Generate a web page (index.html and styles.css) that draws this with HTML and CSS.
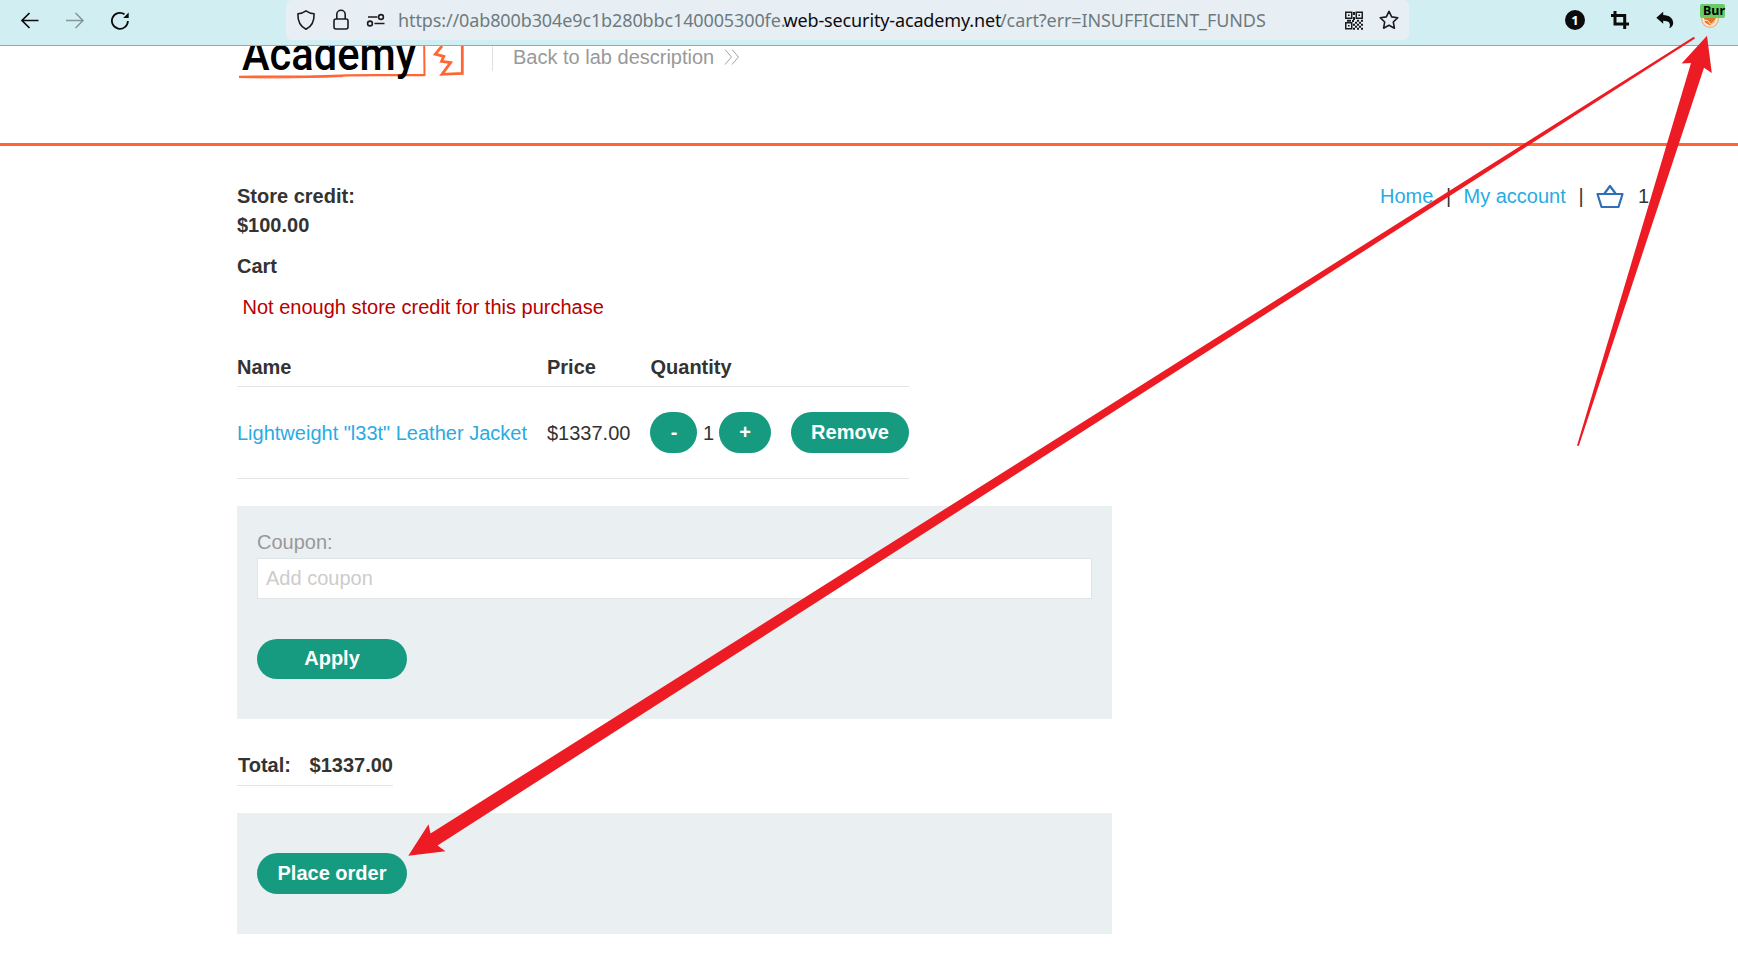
FILE: index.html
```html
<!DOCTYPE html>
<html lang="en">
<head>
<meta charset="utf-8">
<title>Cart</title>
<link rel="stylesheet" href="styles.css">
</head>
<body>
<div class="toolbar">
  <div class="nav-buttons">
    <svg width="20" height="20" viewBox="0 0 20 20"><path d="M18.500 10.500H2M9.500 3 2 10.500 9.500 18" fill="none" stroke="#0c0c0d" stroke-width="1.700"/></svg>
    <svg width="20" height="20" viewBox="0 0 20 20"><path d="M1 10.500H17.500M10.500 3 18 10.500 10.500 18" fill="none" stroke="#859696" stroke-width="1.500"/></svg>
    <svg width="20" height="20" viewBox="0 0 20 20"><path d="M17.900 11A8 8 0 1 1 14.500 4.300" fill="none" stroke="#0c0c0d" stroke-width="1.800"/><path d="M18.700 2.500V8H13.200Z" fill="#0c0c0d"/></svg>
  </div>
  <div class="urlbar">
    <div class="site-icons">
      <svg width="20" height="22" viewBox="0 0 20 22"><path d="M10 1.800C7.500 3.600 4.800 4.500 1.900 4.700 1.700 11.500 3.400 17 10 20.300 16.600 17 18.300 11.500 18.100 4.700 15.200 4.500 12.500 3.600 10 1.800Z" fill="none" stroke="#1c1c1e" stroke-width="1.600" stroke-linejoin="round"/></svg>
      <svg width="18" height="22" viewBox="0 0 18 22"><rect x="2" y="10" width="14" height="10" rx="2" fill="none" stroke="#1c1c1e" stroke-width="1.600"/><path d="M4.800 10V5.500a4.200 4.200 0 0 1 8.400 0V10" fill="none" stroke="#1c1c1e" stroke-width="1.600"/></svg>
      <svg width="20" height="14" viewBox="0 0 20 14"><g fill="none" stroke="#1c1c1e" stroke-width="1.600"><path d="M2 4H11.500M8.500 10.500H18.500"/><circle cx="15" cy="4" r="2.400"/><circle cx="4" cy="10.500" r="2.400"/></g></svg>
    </div>
    <div class="url"><span class="u1">https://0ab800b304e9c1b280bbc140005300fe.</span><span class="u2">web-security-academy.net</span><span class="u3">/cart?err=INSUFFICIENT_FUNDS</span></div>
    <svg class="qr" width="18" height="19" viewBox="0 0 18 19"><g fill="none" stroke="#1c1c1e" stroke-width="1.500"><rect x=".75" y="1.250" width="6" height="6"/><rect x="11.250" y="1.250" width="6" height="6"/><rect x=".75" y="11.750" width="6" height="6"/></g><path d="M3 3.500h1.600v1.600H3zM13.400 3.500H15v1.600h-1.600zM3 14h1.600v1.600H3zM8 1h2v3H8zM8 6h2v3H8zM2 8.700h4v2H2zM7 9h2v2H7zM12 8.700h2v2h-2zM16 8.700h2v2h-2zM10 10.700h2v2h-2zM14 10.700h2v2h-2zM8 12.700h2v2H8zM12 12.700h2v2h-2zM16 12.700h2v2h-2zM10 14.700h2v2h-2zM14 14.700h2v2h-2zM8 16.700h2v2H8zM12 16.700h2v2h-2zM16 16.700h2v2h-2z" fill="#1c1c1e"/></svg>
    <svg class="star" width="20" height="20" viewBox="0 0 20 20"><path d="m10 1.300 2.700 5.600 6.100.8-4.500 4.300 1.100 6.200-5.400-3-5.400 3 1.100-6.200L1.200 7.700l6.100-.8Z" fill="none" stroke="#1c1c1e" stroke-width="1.600" stroke-linejoin="round"/></svg>
  </div>
  <div class="extensions">
    <div class="counter">1</div>
    <svg class="crop" width="18" height="18" viewBox="0 0 18 18"><path d="M4 0V13H18M0 4.500H13.700V18" fill="none" stroke="#0c0c0d" stroke-width="3"/></svg>
    <svg class="undo" width="18" height="18" viewBox="0 0 18 18"><path d="M.3 6.700 7.200.7V4C13.200 4.300 17.200 7 17.200 12.300 17.200 14.500 15.500 16.500 13.300 17.300 15.300 12 12.800 9.800 7.200 9.700V12.800Z" fill="#0c0c0d"/></svg>
    <div class="proxy">
      <svg width="20" height="20" viewBox="0 0 20 20"><circle cx="10" cy="9" r="9" fill="#f2b277"/><circle cx="10" cy="9" r="7.700" fill="#f7e9da"/><path d="M3.500 6 9 7.500 16.500 6 14.500 12.500 10 15.500 5 12.500Z" fill="#e57624"/><path d="M3 10 7.500 10.500 11 14.500 16.500 9" fill="none" stroke="#fbeee0" stroke-width="1"/></svg>
      <span class="badge">Bur</span>
    </div>
  </div>
</div>

<header class="lab-header">
  <svg class="logo" width="230" height="36" viewBox="0 0 230 36">
    <path d="M1 30.800C40 30.500 75 31.200 110 29.300 140 28.900 165 29.300 186.500 29.200" fill="none" stroke="#ff6633" stroke-width="2.300"/>
    <path d="M4 31.600C35 32.300 70 31.700 105 30.600" fill="none" stroke="#ff6633" stroke-width="1"/>
    <path d="M186.200 0 186.500 30" fill="none" stroke="#ff6633" stroke-width="2"/>
    <path d="M204 0 197.300 8.200 205.800 10.500 203.500 15.400 212.600 16.600 204 28.300 224.300 27.300 224.300 0" fill="none" stroke="#ff6633" stroke-width="2.800"/>
    <text class="logo-text" x="4" y="24" textLength="174" lengthAdjust="spacingAndGlyphs">Academy</text>
  </svg>
  <a class="back">Back to lab description
    <svg width="16" height="18" viewBox="0 0 16 18"><path d="M1 1.500 7.500 9 1 16.500M8 1.500 14.500 9 8 16.500" fill="none" stroke="#a4a4a4" stroke-width="1"/></svg>
  </a>
</header>

<main class="page">
  <div class="top">
    <div class="credit">Store credit:<br>$100.00</div>
    <nav class="links">
      <a>Home</a><span>|</span><a>My account</a><span>|</span>
      <svg width="28" height="25" viewBox="0 0 28 25"><path d="M1.500 10H26.500L22.500 23H5.500ZM8.500 9.500 14 2 19.500 9.500" fill="none" stroke="#2f6fb8" stroke-width="2.200" stroke-linejoin="round"/></svg>
      <span class="count">1</span>
    </nav>
  </div>
  <div class="title">Cart</div>
  <div class="error">Not enough store credit for this purchase</div>

  <div class="table">
    <div class="row head"><span>Name</span><span>Price</span><span>Quantity</span></div>
    <div class="row item">
      <a>Lightweight "l33t" Leather Jacket</a>
      <span>$1337.00</span>
      <div class="qty"><button class="minus">-</button><span>1</span><button class="plus">+</button><button class="remove">Remove</button></div>
    </div>
  </div>

  <section class="panel coupon">
    <div class="label">Coupon:</div>
    <div class="field">Add coupon</div>
    <button class="apply">Apply</button>
  </section>

  <div class="total"><span>Total:</span><span>$1337.00</span></div>

  <section class="panel order"><button class="place">Place order</button></section>
</main>

<svg class="arrows" width="1738" height="957" viewBox="0 0 1738 957">
  <path d="M408.300 855.700 428.500 824.300 430.500 833.500 1693.800 36.700 1695 38.600 437.500 845.500 445.500 851.300Z"/>
  <path d="M1707 35.700 1681.600 63.400 1691 63 1577 445.500 1578.800 446 1704 67.700 1711.800 73Z"/>
</svg>
</body>
</html>
```
FILE: styles.css
```css
* { box-sizing: border-box; }
body {
  margin: 0;
  height: 957px;
  overflow: hidden;
  position: relative;
  background: #fff;
  color: #333332;
  font: 20px/29px "Liberation Sans", Arial, sans-serif;
}
svg { display: block; flex: none; }

.toolbar {
  display: flex;
  height: 46px;
  background: #d1eef2;
  border-bottom: 1px solid #96a9ad;
}
.nav-buttons { display: flex; gap: 25px; width: 286px; padding: 10px 0 0 20px; }
.urlbar {
  display: flex;
  width: 1123px;
  height: 40px;
  background: #e8eff4;
  border-radius: 6px;
}
.site-icons { display: flex; align-items: center; gap: 16px; width: 112px; padding-left: 10px; }
.url {
  display: flex;
  width: 947px;
  font: 18px/40px "Noto Sans", sans-serif;
  color: #6d7b7e;
  white-space: pre;
}
.u1 { width: 385.500px; letter-spacing: -0.120px; }
.u2 { width: 216.500px; letter-spacing: -0.140px; color: #0c0c0d; }
.u3 { letter-spacing: -0.100px; }
.qr { margin: 11px 16px 0 0; }
.star { margin-top: 10px; }
.extensions { display: flex; padding-left: 156px; }
.counter {
  width: 20px;
  height: 20px;
  margin: 10px 26px 0 0;
  border-radius: 50%;
  background: #0c0c0d;
  color: #fff;
  font: bold 13px/20px "Noto Sans", sans-serif;
  text-align: center;
}
.crop { margin: 11px 27px 0 0; }
.undo { margin-top: 11px; }
.proxy { position: relative; margin-left: 26px; padding-top: 10px; width: 25px; }
.badge {
  position: absolute;
  left: 0;
  top: 4px;
  width: 25px;
  height: 14px;
  padding-left: 3px;
  border-radius: 2px;
  background: #66cc66;
  color: #000;
  font: bold 12.500px/13px "Noto Sans", sans-serif;
}

.lab-header {
  display: flex;
  height: 100px;
  padding-left: 238px;
  border-bottom: 3px solid #ff6633;
}
.logo { overflow: visible; clip-path: inset(0); }
.logo-text { font: 500 46px Roboto, sans-serif; fill: #000; }
.back {
  display: flex;
  align-items: center;
  gap: 10px;
  height: 25px;
  margin-left: 24px;
  padding-left: 20px;
  padding-bottom: 3px;
  border-left: 1px solid #e1e1e1;
  color: #999;
}

.page { padding: 36px 0 0 237px; }
.top { display: flex; justify-content: space-between; height: 58px; }
.credit, .title { font-weight: bold; }
.links { display: flex; width: 358px; }
.links a, .item a { color: #29abe2; }
.links a:first-child { width: 66px; }
.links a:nth-of-type(2) { width: 115px; }
.links span { width: 17.500px; }
.links svg { margin-top: 2px; }
.links .count { margin-left: 14px; }
.title { margin-top: 12px; }
.error { margin: 12px 0 0 5.500px; color: #b80000; }

.table { width: 672px; margin-top: 31px; }
.row { display: grid; grid-template-columns: 310px 103.500px 1fr; border-bottom: 1px solid #e3e4e5; }
.head { height: 34px; font-weight: bold; }
.item { height: 92px; padding-top: 25px; line-height: 42px; }
.qty { display: flex; margin-left: -0.500px; }
.qty span { width: 22px; padding-left: 1px; text-align: center; }
button {
  display: block;
  padding: 0;
  border: 0;
  border-radius: 20.500px;
  height: 41px;
  background: #169b80;
  color: #fff;
  font: bold 20px/38px "Liberation Sans", Arial, sans-serif;
  padding-bottom: 2px;
}
.minus { width: 47px; padding-left: 1px; }
.plus { width: 52px; }
.remove { width: 118px; margin-left: 20px; }

.panel { width: 875px; padding: 0 20px; background: #eaeff1; }
.coupon { height: 213px; margin-top: 27px; padding-top: 21px; }
.label { height: 31px; line-height: 30px; color: #999; }
.field {
  height: 41px;
  padding-left: 8px;
  border: 1px solid #e1e4e6;
  background: #fff;
  color: #ccc;
  line-height: 39px;
}
.apply { width: 150px; height: 40px; margin-top: 40px; }
.total {
  display: flex;
  justify-content: space-between;
  width: 156px;
  height: 35px;
  margin-top: 32px;
  padding-left: 1px;
  border-bottom: 1px solid #e3e4e5;
  font-weight: bold;
}
.order { height: 121px; margin-top: 27px; padding-top: 40px; }
.place { width: 150px; }

.arrows { position: absolute; left: 0; top: 0; fill: #ed1c24; pointer-events: none; }
```
